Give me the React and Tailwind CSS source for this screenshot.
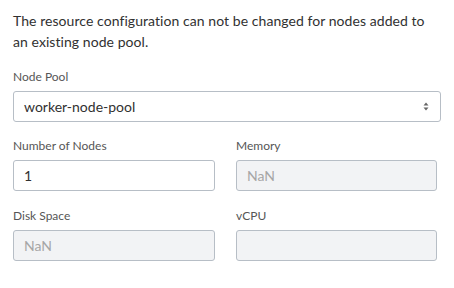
import React from 'react';

const Field = ({ label, children }) => (
  <div className="flex flex-col">
    <label className="text-[12px] leading-[16px] text-[#565656] mb-[6px]">{label}</label>
    {children}
  </div>
);

const inputBase =
  "h-[31px] w-full rounded-[3px] border border-[#b7bec6] px-[10px] text-[14px] outline-none";

export default function App() {
  return (
    <div
      className="w-[454px] h-[288px] bg-white px-[13px] pt-[10px] text-[#313131]"
      style={{ fontFamily: '"Lato", "Liberation Sans", sans-serif' }}
    >
      <p className="text-[14px] leading-[21px] tracking-[0.06px] pr-[10px]">
        The resource configuration can not be changed for nodes added to an existing node pool.
      </p>

      <div className="mt-[17px]">
        <Field label="Node Pool">
          <div className={`${inputBase} flex items-center justify-between bg-white`}>
            <span>worker-node-pool</span>
            <svg width="6" height="9" viewBox="0 0 6 9" className="mr-[1px]">
              <path d="M3 0.5 L5.5 3.5 H0.5 Z" fill="#666" />
              <path d="M3 8.5 L5.5 5.5 H0.5 Z" fill="#666" />
            </svg>
          </div>
        </Field>
      </div>

      <div className="grid grid-cols-[202px_201px] gap-x-[21px] gap-y-[17px] mt-[16px]">
        <Field label="Number of Nodes">
          <input className={`${inputBase} bg-white text-[#313131]`} defaultValue="1" />
        </Field>
        <Field label="Memory">
          <input className={`${inputBase} bg-[#f2f3f5] text-[#a6a6a6]`} defaultValue="NaN" disabled />
        </Field>
        <Field label="Disk Space">
          <input className={`${inputBase} bg-[#f2f3f5] text-[#a6a6a6]`} defaultValue="NaN" disabled />
        </Field>
        <Field label="vCPU">
          <input className={`${inputBase} bg-[#f2f3f5] text-[#a6a6a6]`} defaultValue="" disabled />
        </Field>
      </div>
    </div>
  );
}
